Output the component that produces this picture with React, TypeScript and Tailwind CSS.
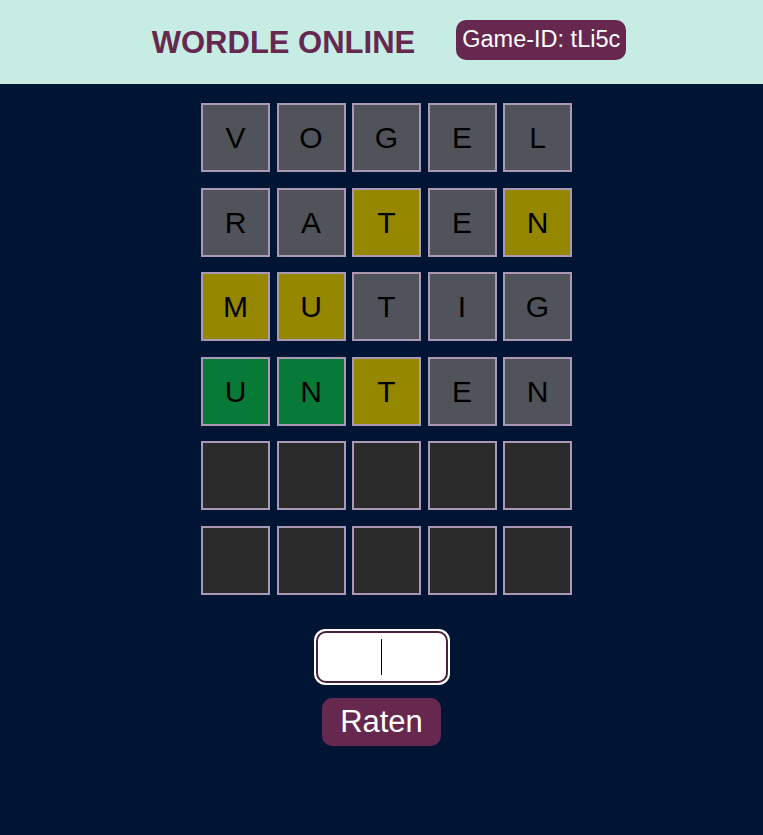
const rows: { l: string; c: string }[][] = [
  [
    { l: "V", c: "g" },
    { l: "O", c: "g" },
    { l: "G", c: "g" },
    { l: "E", c: "g" },
    { l: "L", c: "g" },
  ],
  [
    { l: "R", c: "g" },
    { l: "A", c: "g" },
    { l: "T", c: "y" },
    { l: "E", c: "g" },
    { l: "N", c: "y" },
  ],
  [
    { l: "M", c: "y" },
    { l: "U", c: "y" },
    { l: "T", c: "g" },
    { l: "I", c: "g" },
    { l: "G", c: "g" },
  ],
  [
    { l: "U", c: "ok" },
    { l: "N", c: "ok" },
    { l: "T", c: "y" },
    { l: "E", c: "g" },
    { l: "N", c: "g" },
  ],
  [
    { l: "", c: "e" },
    { l: "", c: "e" },
    { l: "", c: "e" },
    { l: "", c: "e" },
    { l: "", c: "e" },
  ],
  [
    { l: "", c: "e" },
    { l: "", c: "e" },
    { l: "", c: "e" },
    { l: "", c: "e" },
    { l: "", c: "e" },
  ],
];

const tileBg: Record<string, string> = {
  g: "bg-[#50545a]",
  y: "bg-[#968700]",
  ok: "bg-[#087a37]",
  e: "bg-[#2b2b2b]",
};

export default function App() {
  return (
    <div
      className="min-h-[835px] bg-[#001533]"
      style={{ fontFamily: '"Liberation Sans", Arial, sans-serif' }}
    >
      {/* header */}
      <header className="h-[84px] bg-[#c6ece3] flex items-center justify-center gap-[41px] pl-[15px]">
        <h1 className="text-[31px] font-bold text-[#66284f] leading-none">WORDLE ONLINE</h1>
        <div className="h-[40px] mb-[4px] px-[6px] rounded-[10px] bg-[#66284f] text-white text-[23.5px] flex items-center">
          Game-ID: tLi5c
        </div>
      </header>

      {/* board */}
      <div className="flex flex-col items-center gap-[15.6px] pt-[19px] pl-[10px]">
        {rows.map((row, i) => (
          <div key={i} className="flex gap-[6.5px]">
            {row.map((t, j) => (
              <div
                key={j}
                className={`w-[69px] h-[69px] border-2 border-[#ab98b4] ${tileBg[t.c]} flex items-center justify-center text-[30px] text-black`}
              >
                {t.l}
              </div>
            ))}
          </div>
        ))}
      </div>

      {/* guess */}
      <div className="flex flex-col items-center pt-[34px]">
        <div className="w-[136px] h-[56px] rounded-[11px] border border-white bg-white p-[1px]">
          <div className="w-full h-full rounded-[10px] border-2 border-[#4a1f3c] bg-white flex items-center justify-center">
            <div className="w-[1px] h-[36px] bg-black" />
          </div>
        </div>
        <button className="mt-[13px] h-[48px] px-[18px] rounded-[10px] bg-[#66284f] text-white text-[31px] leading-none">
          Raten
        </button>
      </div>
    </div>
  );
}
